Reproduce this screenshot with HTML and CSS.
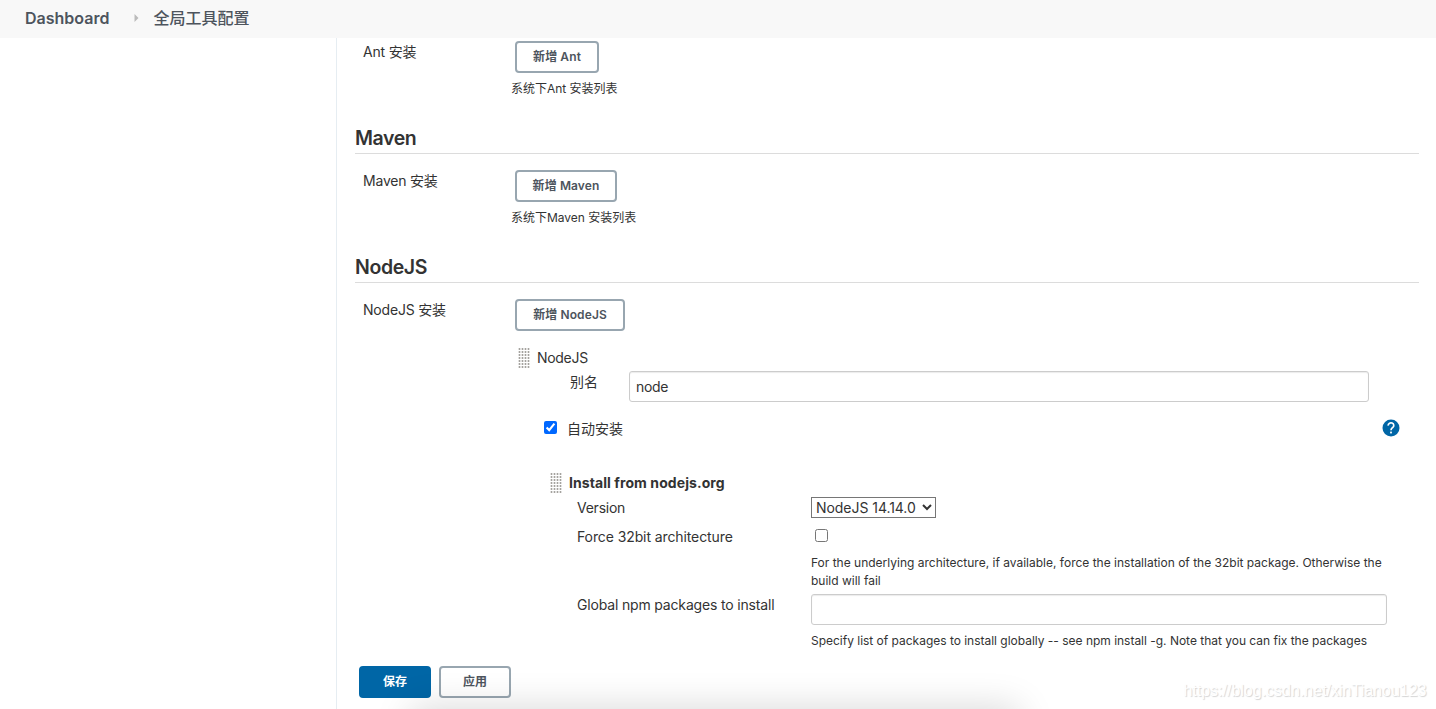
FILE: index.html
```html
<!DOCTYPE html>
<html lang="zh-CN">
<head>
<meta charset="utf-8">
<title>全局工具配置</title>
<link rel="stylesheet" href="styles.css">
</head>
<body>
<header class="breadcrumbs">
  <span class="crumb crumb-home">Dashboard</span>
  <svg class="crumb-arrow" width="5" height="8" viewBox="0 0 5 8"><path d="M0.5 0L4.5 4L0.5 8Z" fill="#bbb"/></svg>
  <span class="crumb crumb-current">全局工具配置</span>
</header>
<div class="page">
  <aside class="side"></aside>
  <main class="main">
    <section class="tool">
      <div class="label">Ant 安装</div>
      <div class="control">
        <button class="btn btn-ant">新增 Ant</button>
        <p class="hint">系统下Ant 安装列表</p>
      </div>
    </section>
    <h2 class="title">Maven</h2>
    <section class="tool">
      <div class="label">Maven 安装</div>
      <div class="control">
        <button class="btn btn-maven">新增 Maven</button>
        <p class="hint">系统下Maven 安装列表</p>
      </div>
    </section>
    <h2 class="title">NodeJS</h2>
    <section class="tool">
      <div class="label">NodeJS 安装</div>
      <div class="control">
        <button class="btn btn-node">新增 NodeJS</button>
        <div class="chunk-head"><span class="handle"></span><span class="node-name">NodeJS</span></div>
        <div class="name-row">
          <label class="name-label">别名</label>
          <input class="field" type="text" value="node">
        </div>
        <div class="auto-row">
          <input class="check" type="checkbox" checked>
          <span class="auto-label">自动安装</span>
          <svg class="help" width="18" height="18" viewBox="0 0 18 18"><circle cx="9" cy="9" r="8.5" fill="#0066a6"/><path d="M6.2 6.7A2.8 2.6 0 1 1 10.7 8.5C9.5 9.5 9 9.8 9 11.3" fill="none" stroke="#fff" stroke-width="1.7"/><rect x="8.1" y="12.6" width="1.8" height="1.8" fill="#fff"/></svg>
        </div>
        <div class="installer">
          <div class="installer-head"><span class="handle"></span><b class="installer-title">Install from nodejs.org</b></div>
          <div class="option version-row">
            <span class="option-label">Version</span>
            <select class="select"><option>NodeJS 14.14.0</option></select>
          </div>
          <div class="option force-row">
            <span>Force 32bit architecture</span>
            <div>
              <input class="check check-force" type="checkbox">
              <p class="desc">For the underlying architecture, if available, force the installation of the 32bit package. Otherwise the<br>build will fail</p>
            </div>
          </div>
          <div class="option npm-row">
            <span class="option-label npm">Global npm packages to install</span>
            <div>
              <input class="field field-npm" type="text">
              <p class="desc">Specify list of packages to install globally -- see npm install -g. Note that you can fix the packages</p>
            </div>
          </div>
        </div>
      </div>
    </section>
    <footer class="actions">
      <button class="btn primary">保存</button>
      <button class="btn apply">应用</button>
    </footer>
  </main>
</div>
<div class="bottom-fade"><div class="bottom-shadow"></div></div>
<div class="watermark">https://blog.csdn.net/xinTianou123</div>
</body>
</html>
```
FILE: styles.css
```css
* { box-sizing: border-box; }
body { margin: 0; height: 709px; overflow: hidden; display: flex; flex-direction: column; background: #fff; color: #333; font: 14px/20px Inter, "Noto Sans CJK SC", sans-serif; position: relative; }
p, h2 { margin: 0; }
.breadcrumbs { height: 38px; flex: none; background: #f8f8f8; display: flex; align-items: center; padding: 0 25px 2px; color: #4d545d; font-size: 16px; }
.crumb { font-weight: 600; white-space: nowrap; }
.crumb-home { width: 85px; }
.crumb-current { font-weight: 500; }
.crumb-arrow { margin: 0 15px 0 23.5px; }
.page { flex: 1; display: flex; min-height: 0; }
.side { width: 336px; flex: none; }
.main { flex: 1; border-left: 1px solid #e6edf2; padding: 3px 17px 0 18px; }
.tool { display: grid; grid-template-columns: 148px 1fr; padding-left: 8px; }
.label { padding-top: 1px; letter-spacing: -0.2px; }
.control { min-width: 0; }
.btn { display: block; height: 32px; margin: 0 0 0 4px; padding: 0; background: #fff; border: 2px solid #98a6b0; border-radius: 4px; color: #4d545d; font: 600 12px/26px Inter, "Noto Sans CJK SC", sans-serif; letter-spacing: 0.1px; white-space: nowrap; }
.btn-ant { width: 84px; }
.btn-maven { width: 102px; }
.btn-node { width: 110px; }
.hint { font-size: 12px; line-height: 18px; margin-top: 7px; letter-spacing: -0.02px; }
.title { margin: 28px 0 16px; height: 28px; border-bottom: 1px solid #dcdcdc; font-size: 19.5px; line-height: 25px; font-weight: 600; letter-spacing: -0.4px; }
.chunk-head { display: flex; margin: 17px 0 3px 7px; }
.handle { width: 12px; height: 20px; margin-right: 7px; background: radial-gradient(circle at 1.5px 1px, #a5a39f 0.5px, #fff 1.4px) 0 0 / 3px 3px; }
.node-name { letter-spacing: -0.3px; }
.name-row { display: flex; padding-left: 59px; }
.name-label { width: 59px; padding-top: 1px; }
.field { width: 740px; height: 31px; border: 1px solid #ccc; border-radius: 3px; box-shadow: inset 0 1px 1px rgba(0,0,0,.08); padding: 0 6px; font: 14px Inter, sans-serif; letter-spacing: -0.3px; color: #333; outline: 0; display: block; }
.auto-row { display: flex; height: 20px; margin-top: 17px; padding-left: 33px; }
.check { width: 13px; height: 13px; margin: 2px 10px 0 0; accent-color: #0068ff; }
.help { margin: 0 19px 0 auto; }
.installer { padding-left: 39px; margin-top: 34px; }
.installer-head { display: flex; }
.installer-title { letter-spacing: 0.08px; font-weight: 700; }
.option { display: grid; grid-template-columns: 234px 1fr; padding-left: 27px; letter-spacing: -0.1px; }
.version-row { height: 34px; padding-top: 4px; }
.option-label { padding-top: 1px; }
.npm { letter-spacing: -0.17px; }
.version-row .option-label { letter-spacing: -0.25px; }
.select { width: 125px; height: 21px; border: 1px solid #767676; border-radius: 0; background: #fff; font: 14px Inter, sans-serif; letter-spacing: -0.05px; color: #333; padding: 0; }
.force-row { height: 67px; }
.check-force { display: block; margin: 2px 0 12px 4px; }
.desc { font-size: 12px; line-height: 18px; white-space: nowrap; letter-spacing: 0; }
.npm-row .desc { letter-spacing: -0.015px; }
.field-npm { width: 576px; margin-bottom: 7px; }
.actions { display: flex; gap: 4px; margin-top: 16px; }
.primary { width: 72px; background: #0066a6; border-color: #0066a6; color: #fff; }
.apply { width: 72px; background: transparent; }
.primary, .apply { font-weight: 600; letter-spacing: 0; }
.bottom-fade { position: absolute; left: 0; right: 0; bottom: 0; height: 60px; overflow: hidden; pointer-events: none; }
.bottom-shadow { margin: 62px 0 0 415px; width: 600px; height: 40px; box-shadow: 0 0 36px 4px rgba(0,0,0,.15); }
.watermark { position: absolute; right: 9.5px; top: 681px; font: 16px/20px "Liberation Sans", sans-serif; color: #fff; text-shadow: 1px 1px 1px #d4d4d4; }
```
